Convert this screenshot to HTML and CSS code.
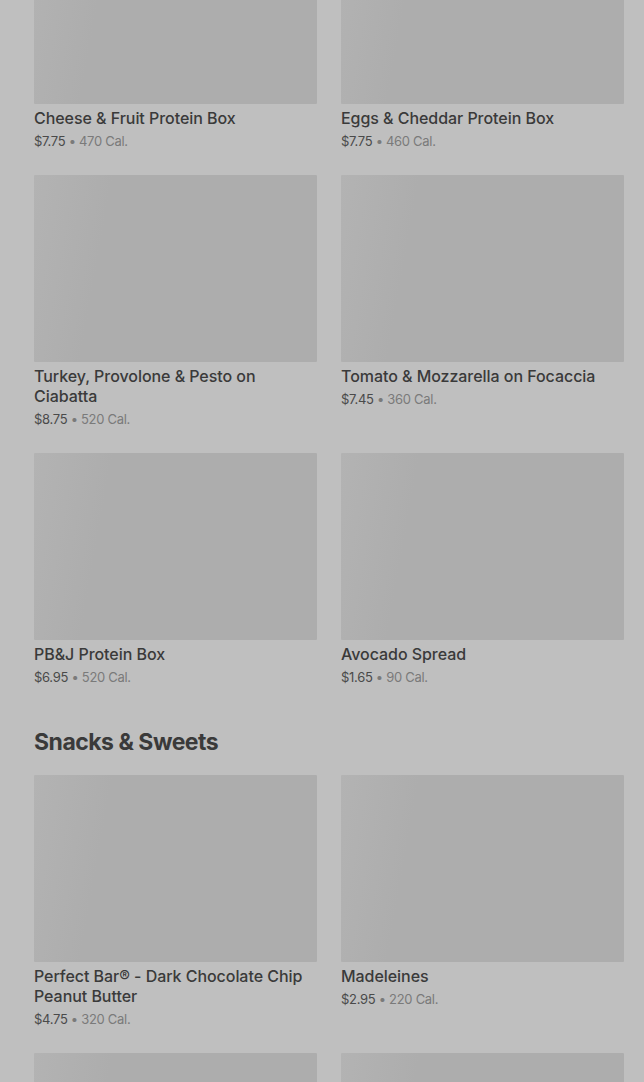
FILE: index.html
```html
<!DOCTYPE html>
<html>
<head>
<meta charset="utf-8">
<link rel="stylesheet" href="styles.css">
</head>
<body>
<main class="menu">
  <section class="section">
    <div class="grid">
      <div class="card"><div class="img"></div><div class="title">Cheese &amp; Fruit Protein Box</div><div class="meta"><span class="price">$7.75</span> • 470 Cal.</div></div>
      <div class="card"><div class="img"></div><div class="title">Eggs &amp; Cheddar Protein Box</div><div class="meta"><span class="price">$7.75</span> • 460 Cal.</div></div>
      <div class="card"><div class="img"></div><div class="title">Turkey, Provolone &amp; Pesto on Ciabatta</div><div class="meta"><span class="price">$8.75</span> • 520 Cal.</div></div>
      <div class="card"><div class="img"></div><div class="title">Tomato &amp; Mozzarella on Focaccia</div><div class="meta"><span class="price">$7.45</span> • 360 Cal.</div></div>
      <div class="card"><div class="img"></div><div class="title">PB&amp;J Protein Box</div><div class="meta"><span class="price">$6.95</span> • 520 Cal.</div></div>
      <div class="card"><div class="img"></div><div class="title">Avocado Spread</div><div class="meta"><span class="price">$1.65</span> • 90 Cal.</div></div>
    </div>
  </section>
  <section class="section">
    <h2 class="heading">Snacks &amp; Sweets</h2>
    <div class="grid">
      <div class="card"><div class="img"></div><div class="title">Perfect Bar® - Dark Chocolate Chip Peanut Butter</div><div class="meta"><span class="price">$4.75</span> • 320 Cal.</div></div>
      <div class="card"><div class="img"></div><div class="title">Madeleines</div><div class="meta"><span class="price">$2.95</span> • 220 Cal.</div></div>
      <div class="card"><div class="img"></div></div>
      <div class="card"><div class="img"></div></div>
    </div>
  </section>
</main>
</body>
</html>
```
FILE: styles.css
```css
html, body {
  margin: 0;
  padding: 0;
  background: #bfbfbf;
}
body {
  font-family: Inter, "Noto Sans", Roboto, sans-serif;
  color: #3b3b3b;
  overflow: hidden;
  height: 1082px;
}
.menu {
  margin-top: -83px;
  padding: 0 20px 0 34px;
  display: flex;
  flex-direction: column;
  gap: 41px;
}
.grid {
  display: grid;
  grid-template-columns: 1fr 1fr;
  column-gap: 24px;
  row-gap: 24px;
}
.card {
  display: flex;
  flex-direction: column;
}
.img {
  height: 187px;
  background: linear-gradient(100deg, #b3b3b3 0%, #adadad 25%, #adadad 100%);
  border-radius: 1px;
}
.title {
  margin-top: 4px;
  font-size: 16px;
  font-weight: 500;
  line-height: 20px;
  color: #3a3a3a;
  letter-spacing: -0.05px;
}
.meta {
  margin-top: 3px;
  font-size: 13px;
  line-height: 20px;
  color: #7a7a7a;
  letter-spacing: -0.3px;
}
.price {
  color: #4a4a4a;
}
.heading {
  margin: 0 0 19px 0;
  font-size: 23px;
  line-height: 28px;
  font-weight: 700;
  letter-spacing: -0.5px;
  color: #3a3a3a;
}
```
